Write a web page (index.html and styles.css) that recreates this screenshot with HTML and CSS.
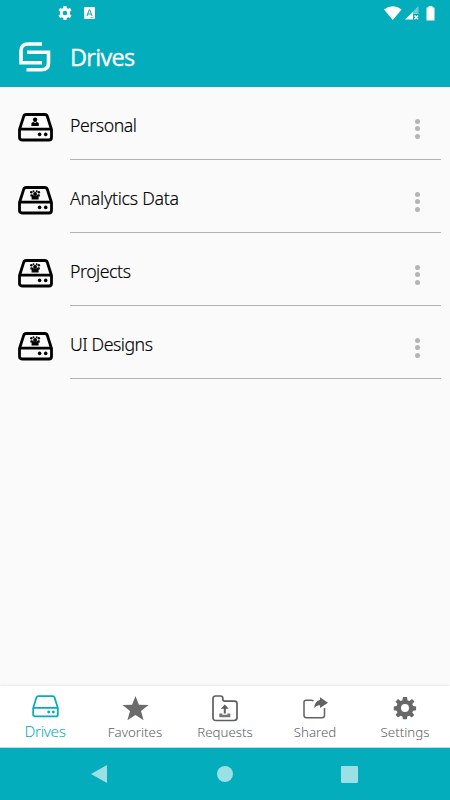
FILE: index.html
```html
<!DOCTYPE html>
<html lang="en">
<head>
<meta charset="utf-8">
<title>Drives</title>
<link rel="stylesheet" href="styles.css">
</head>
<body>
<svg class="defs" aria-hidden="true">
  <defs>
    <g id="drive" fill="none" stroke="currentColor" stroke-linejoin="round">
      <path d="M1.5 16.5 5.7 3.3Q6.3 1.5 8.2 1.5H26.8Q28.7 1.5 29.3 3.3L33.5 16.5V24.5Q33.5 27 31 27H4Q1.5 27 1.5 24.5ZM1.5 16.2H33.5"/>
      <g fill="currentColor" stroke="none"><circle cx="21.6" cy="21.4" r="1.8"/><circle cx="27.7" cy="21.4" r="1.8"/></g>
    </g>
    <g id="team" fill="currentColor">
      <circle cx="13.3" cy="6.3" r="1.2"/><circle cx="15.5" cy="5.2" r="1"/><circle cx="18.7" cy="5.2" r="1"/><circle cx="20.9" cy="6.3" r="1.2"/>
      <circle cx="17.1" cy="8" r="1.9"/>
      <path d="M12.4 8.5Q14.3 7.7 15.4 9.3L17.1 10 18.8 9.3Q19.9 7.7 21.8 8.5V10.6H20.6V13.6H13.6V10.6H12.4Z"/>
    </g>
  </defs>
</svg>
<div class="screen">
  <header class="top">
    <div class="status">
      <div class="status-left">
        <svg width="14" height="14" viewBox="0 0 24 24"><path fill="#fff" fill-rule="evenodd" d="M9.5 0h5l.6 3.4 2.2 1.3 3.3-1.3 2.5 4.3-2.7 2.2v4.2l2.7 2.2-2.5 4.3-3.3-1.3-2.2 1.3-.6 3.4h-5l-.6-3.4-2.2-1.3-3.3 1.3L.9 16.3l2.7-2.2V9.9L.9 7.7l2.5-4.3 3.3 1.3 2.2-1.3ZM12 8a4 4 0 1 0 0 8 4 4 0 0 0 0-8Z"/></svg>
        <svg width="11" height="12" viewBox="0 0 11 12"><rect width="11" height="12" rx="1" fill="#fff"/><path d="M3 9 5.2 2.8H5.8L8 9M3.6 7H7.2" fill="none" stroke="#03adbb"/><path d="M6.5 10.5H9.5" stroke="#03adbb" stroke-width=".6"/></svg>
      </div>
      <div class="status-right">
        <svg width="18" height="14" viewBox="0 0 18 14"><path fill="#fff" d="M0 3.5Q8.8-2.8 17.6 3.5L8.8 14Z"/></svg>
        <svg width="14" height="14" viewBox="0 0 14 14"><path fill="#fff" opacity=".4" d="M13.5 0V8H8V5.5Z"/><path fill="#fff" d="M8 5.7V13.5H0Z"/><path stroke="#fff" stroke-width="1.4" d="m9.5 9.5 3.5 3.7m0-3.7-3.5 3.7"/></svg>
        <svg width="9" height="15" viewBox="0 0 9 15"><path fill="#fff" d="M2.5 0h4v1.5H8.5V14.5H.5V1.5h2Z"/></svg>
      </div>
    </div>
    <div class="title-row">
      <svg width="32" height="31" viewBox="0 0 32 31"><path fill="none" stroke="#fff" stroke-width="3.6" d="M23 2H9Q2 2 2 9V20.8H23M8 10.2H29.5V21Q29.5 27.8 22.5 27.8H7.5"/></svg>
      <h1>Drives</h1>
    </div>
  </header>
  <main class="list">
    <div class="row">
      <svg class="drive" width="35" height="29" viewBox="0 0 35 29"><use href="#drive" stroke-width="2.8"/><circle cx="17.1" cy="6.7" r="2.2"/><path d="M13.4 13V10.6Q13.4 9.1 15.6 9.1L17.1 10 18.6 9.1Q20.8 9.1 20.8 10.6V13Z"/></svg>
      <div class="body"><span class="name personal">Personal</span><span class="dots"><i></i><i></i><i></i></span></div>
    </div>
    <div class="row">
      <svg class="drive" width="35" height="29" viewBox="0 0 35 29"><use href="#drive" stroke-width="2.8"/><use href="#team"/></svg>
      <div class="body"><span class="name analytics">Analytics Data</span><span class="dots"><i></i><i></i><i></i></span></div>
    </div>
    <div class="row">
      <svg class="drive" width="35" height="29" viewBox="0 0 35 29"><use href="#drive" stroke-width="2.8"/><use href="#team"/></svg>
      <div class="body"><span class="name projects">Projects</span><span class="dots"><i></i><i></i><i></i></span></div>
    </div>
    <div class="row">
      <svg class="drive" width="35" height="29" viewBox="0 0 35 29"><use href="#drive" stroke-width="2.8"/><use href="#team"/></svg>
      <div class="body"><span class="name designs">UI Designs</span><span class="dots"><i></i><i></i><i></i></span></div>
    </div>
  </main>
  <nav class="tabs">
    <a class="tab active"><svg width="27" height="23" viewBox="0 0 35 29" preserveAspectRatio="none"><use href="#drive" stroke-width="2.2"/></svg><span>Drives</span></a>
    <a class="tab"><svg width="27" height="25" viewBox="0 0 27 25"><path fill="#6b6b6b" d="m13.5 0 3.4 8.7 9.6.4-7.5 5.8 2.6 9.4-8.1-5.3-8.1 5.3L8 14.9.5 9.1l9.6-.4Z"/></svg><span>Favorites</span></a>
    <a class="tab"><svg width="26" height="27" viewBox="0 0 26 27"><path fill="none" stroke="#5e5e5e" stroke-width="1.7" d="M1 4Q1 1 3.5 1H8.5Q10.8 1 10.8 3.2V4.3Q10.8 6.2 13 6.2H22.5Q25 6.2 25 8.7V22.5Q25 25.5 22 25.5H4Q1 25.5 1 22.5Z"/><path fill="#5e5e5e" d="m12.8 9.5 4 4.3h-3v4.7h-2v-4.7h-3Z"/><path fill="#777" d="M7.3 18.5h3v1.3h5v-1.3h3v3.7h-11Z"/></svg><span>Requests</span></a>
    <a class="tab"><svg width="25" height="23" viewBox="0 0 25 23"><path fill="none" stroke="#626262" stroke-width="1.5" d="M10.5 4Q9.5 3.2 8 3.2H3Q1 3.2 1 5.2V18.2Q1 20.7 3.5 20.7H19Q21.5 20.7 21.5 18.2V11"/><path fill="#626262" d="M17 .3 25 5.7 17 11V8.2Q13.7 7.7 11.2 11 11.8 4 17 3.1Z"/></svg><span>Shared</span></a>
    <a class="tab"><svg width="24" height="24" viewBox="0 0 24 24"><path fill="#686868" fill-rule="evenodd" d="M10 1h4l.5 3.2 2 .8L19 3.1 21.4 5.6 19.3 8.1l.8 2 3 .4v3.7l-3 .5-.8 1.8 2 2.6-2.6 2.4-2.4-1.8-2 .8-.4 2.7h-4l-.5-2.7-1.8-.8-2.6 1.8L2.6 19l1.8-2.5-.8-1.8-2.8-.5v-3.7l2.8-.4.8-2L2.6 5.6 5 3.1 7.6 5l1.8-.8ZM12 8a4 4 0 1 0 0 8 4 4 0 0 0 0-8Z"/></svg><span>Settings</span></a>
  </nav>
  <footer class="system">
    <svg width="16" height="18" viewBox="0 0 16 18"><path fill="#9be0e5" d="M16 0V18L0 9Z"/></svg>
    <span class="home"></span>
    <span class="recent"></span>
  </footer>
</div>
</body>
</html>
```
FILE: styles.css
```css
* { box-sizing: border-box; }
body { margin: 0; font-family: "Noto Sans", "Open Sans", sans-serif; }
svg { display: block; flex: none; }
.defs { position: absolute; width: 0; height: 0; }
.screen { width: 450px; height: 800px; display: flex; flex-direction: column; background: #fafafa; overflow: hidden; }
.top { height: 87px; background: #03adbb; color: #fff; }
.status { height: 26px; display: flex; justify-content: space-between; align-items: center; padding: 0 15px 0 58px; }
.status-left { display: flex; gap: 12px; align-items: center; }
.status-right { display: flex; gap: 3px; align-items: center; }
.status-right svg:last-child { margin-left: 4px; }
.title-row { display: flex; align-items: center; height: 62px; padding-left: 19px; gap: 19px; }
h1 { margin: 0; font-family: "Open Sans", sans-serif; font-size: 23.5px; line-height: 30px; font-weight: 500; letter-spacing: -.7px; -webkit-text-stroke: .3px #fff; }
.row { height: 73px; display: flex; padding: 0 9px 0 18px; gap: 17px; }
.drive { margin-top: 26px; color: #000; }
.body { flex: 1; height: 73px; border-bottom: 1px solid #b3b3b3; display: flex; justify-content: space-between; padding-right: 21px; }
.name { font-size: 17.7px; line-height: 24px; margin-top: 26px; font-weight: 300; color: #000; white-space: nowrap; letter-spacing: -.45px; -webkit-text-stroke: .15px #000; }
.analytics { letter-spacing: -.25px; }
.dots { display: flex; flex-direction: column; gap: 2.5px; margin-top: 31.5px; }
.dots i { width: 5px; height: 5px; border-radius: 50%; background: #b5b5b5; }
.tabs { margin-top: auto; height: 62px; background: #fff; display: flex; border-bottom: 1px solid #c4dadd; box-shadow: 0 -1px 2px #0001; }
.tab { flex: 1; height: 61px; display: flex; flex-direction: column; align-items: center; justify-content: space-between; color: #606060; font-size: 13.3px; font-weight: 300; padding: 7px 0 6px; }
.tab span { line-height: 18px; }
.tab svg { margin: auto 0; }
.tab.active { color: #03adbb; font-size: 15.2px; font-weight: 350; letter-spacing: -.35px; padding: 5px 0 7px; }
.system { height: 52px; background: #03adbb; display: flex; align-items: center; justify-content: space-between; padding: 0 92px 0 91px; }
.home { width: 16px; height: 16px; border-radius: 50%; background: #9be0e5; margin-left: 1px; }
.recent { width: 17px; height: 17px; border-radius: 1px; background: #9be0e5; }
```
